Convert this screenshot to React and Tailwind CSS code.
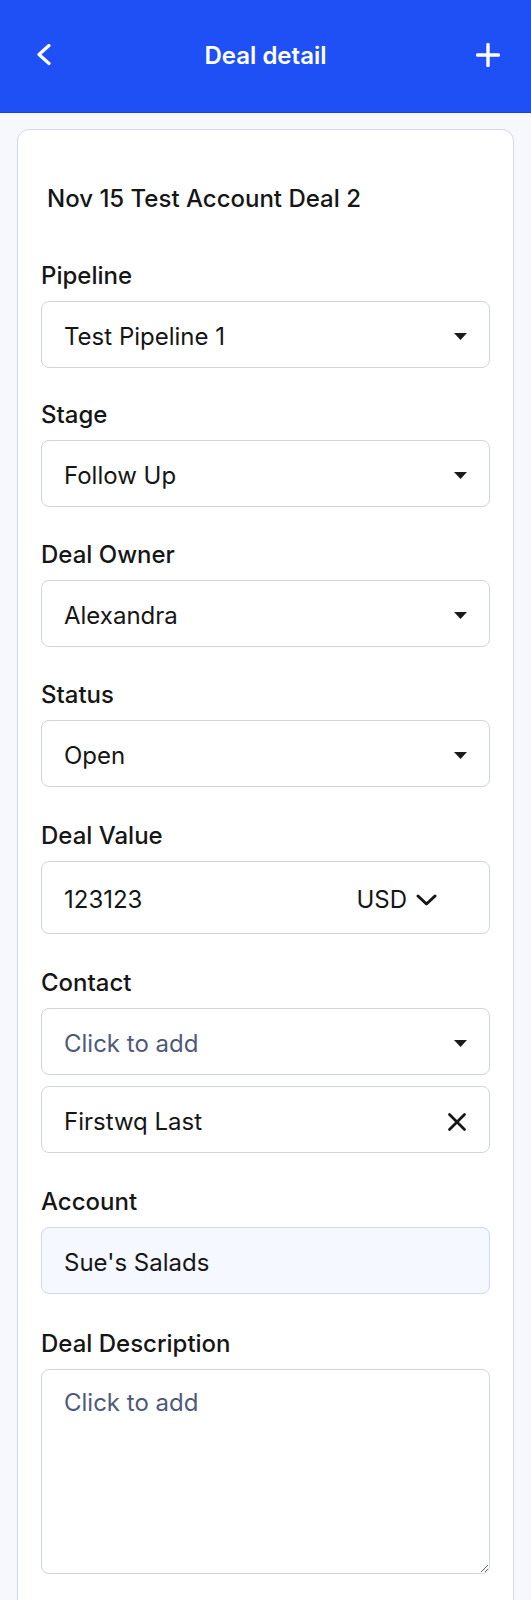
import React from "react";

function Caret() {
  return (
    <svg width="13" height="7" viewBox="0 0 13 7" className="shrink-0">
      <polygon points="0,0 13,0 6.5,7" fill="#1b1b1b" />
    </svg>
  );
}

function Label({ children }) {
  return (
    <div className="text-[24px] leading-[32px] font-medium text-[#161616] mb-[9px]">
      {children}
    </div>
  );
}

function SelectBox({ value, placeholder }) {
  return (
    <div className="h-[67px] rounded-lg border border-[#d1d5df] bg-white flex items-center justify-between pl-[22px] pr-[22px] pt-1">
      <span
        className={
          placeholder
            ? "text-[24px] leading-[32px] text-[#4f5a78]"
            : "text-[24px] leading-[32px] text-[#161616]"
        }
      >
        {value}
      </span>
      <Caret />
    </div>
  );
}

export default function App() {
  return (
    <div className="min-h-[1600px] bg-[#f6f8fe] font-['Inter',sans-serif]">
      {/* Header */}
      <div className="h-[113px] bg-[#1e50f5] border-b border-[#1741d6] grid grid-cols-[1fr_auto_1fr] items-center text-white">
        <div className="pl-[36px] flex items-center">
          <svg width="16" height="22" viewBox="0 0 16 22" className="-mt-[2px]">
            <polyline
              points="13,1.5 3,10.5 13,19.5"
              fill="none"
              stroke="white"
              strokeWidth="3.2"
              strokeLinecap="round"
              strokeLinejoin="round"
            />
          </svg>
        </div>
        <div className="text-[24px] leading-[32px] font-semibold">Deal detail</div>
        <div className="pr-[31px] flex items-center justify-end">
          <svg width="24" height="24" viewBox="0 0 24 24" className="-mt-[2px]">
            <path
              d="M12 1.5 V22.5 M1.5 12 H22.5"
              fill="none"
              stroke="white"
              strokeWidth="3.4"
              strokeLinecap="round"
            />
          </svg>
        </div>
      </div>

      {/* Card */}
      <div className="px-[17px] pt-4">
        <div className="bg-white border border-[#d4d8e2] rounded-xl px-[23px] pt-[53px] pb-12">
          <div className="ml-1.5 text-[24px] leading-[32px] font-medium text-[#161616]">
            Nov 15 Test Account Deal 2
          </div>

          <div className="mt-[45px]">
            <Label>Pipeline</Label>
            <SelectBox value="Test Pipeline 1" />
          </div>

          <div className="mt-[31px]">
            <Label>Stage</Label>
            <SelectBox value="Follow Up" />
          </div>

          <div className="mt-[32px]">
            <Label>Deal Owner</Label>
            <SelectBox value="Alexandra" />
          </div>

          <div className="mt-[32px]">
            <Label>Status</Label>
            <SelectBox value="Open" />
          </div>

          <div className="mt-[33px]">
            <Label>Deal Value</Label>
            <div className="h-[73px] rounded-lg border border-[#d1d5df] bg-white flex items-center justify-between pl-[22px] pr-[52px] pt-1">
              <span className="text-[24px] leading-[32px] text-[#161616]">123123</span>
              <div className="flex items-center gap-[9px]">
                <span className="text-[24px] leading-[32px] text-[#161616]">USD</span>
                <svg width="21" height="12" viewBox="0 0 21 12">
                  <polyline
                    points="2,2 10.5,10 19,2"
                    fill="none"
                    stroke="#161616"
                    strokeWidth="3"
                    strokeLinecap="round"
                    strokeLinejoin="round"
                  />
                </svg>
              </div>
            </div>
          </div>

          <div className="mt-[33px]">
            <Label>Contact</Label>
            <SelectBox value="Click to add" placeholder />
            <div className="mt-[11px] h-[67px] rounded-lg border border-[#d1d5df] bg-white flex items-center justify-between pl-[22px] pr-[22px] pt-1">
              <span className="text-[24px] leading-[32px] text-[#161616]">Firstwq Last</span>
              <svg width="20" height="20" viewBox="0 0 20 20">
                <path
                  d="M2.5 2.5 L17.5 17.5 M17.5 2.5 L2.5 17.5"
                  fill="none"
                  stroke="#161616"
                  strokeWidth="2.8"
                  strokeLinecap="round"
                />
              </svg>
            </div>
          </div>

          <div className="mt-[33px]">
            <Label>Account</Label>
            <div className="h-[67px] rounded-lg border border-[#c9d7f8] bg-[#f5f8ff] flex items-center pl-[22px] pr-[22px] pt-1">
              <span className="text-[24px] leading-[32px] text-[#161616]">Sue's Salads</span>
            </div>
          </div>

          <div className="mt-[34px]">
            <Label>Deal Description</Label>
            <textarea
              placeholder="Click to add"
              className="block w-full h-[205px] rounded-lg border border-[#d1d5df] bg-white px-[22px] pt-[17px] text-[24px] leading-[32px] text-[#161616] placeholder:text-[#4f5a78] outline-none"
            />
          </div>
        </div>
      </div>
    </div>
  );
}
